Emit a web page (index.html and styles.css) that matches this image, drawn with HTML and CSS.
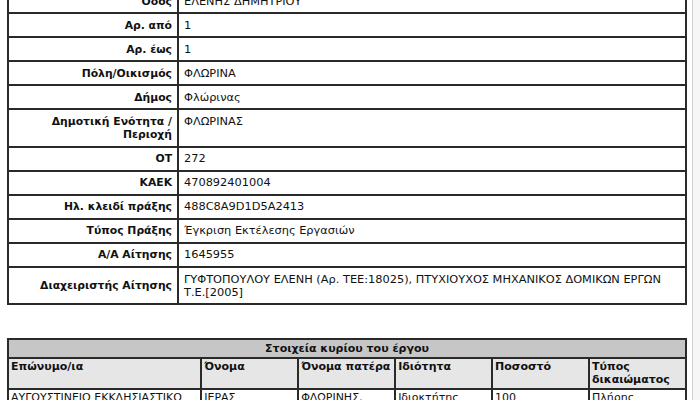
FILE: index.html
```html
<!DOCTYPE html>
<html lang="el">
<head>
<meta charset="utf-8">
<title>Στοιχεία έργου</title>
<link rel="stylesheet" href="styles.css">
</head>
<body>
<div class="page">
  <div class="content">
    <table class="info">
      <colgroup><col class="label-col"><col></colgroup>
      <tr><th>Οδός</th><td>ΕΛΕΝΗΣ ΔΗΜΗΤΡΙΟΥ</td></tr>
      <tr><th>Αρ. από</th><td>1</td></tr>
      <tr><th>Αρ. έως</th><td>1</td></tr>
      <tr><th>Πόλη/Οικισμός</th><td>ΦΛΩΡΙΝΑ</td></tr>
      <tr><th>Δήμος</th><td>Φλώρινας</td></tr>
      <tr><th>Δημοτική Ενότητα /<br>Περιοχή</th><td>ΦΛΩΡΙΝΑΣ</td></tr>
      <tr><th>ΟΤ</th><td>272</td></tr>
      <tr><th>ΚΑΕΚ</th><td>470892401004</td></tr>
      <tr><th>Ηλ. κλειδί πράξης</th><td>488C8A9D1D5A2413</td></tr>
      <tr><th>Τύπος Πράξης</th><td>Έγκριση Εκτέλεσης Εργασιών</td></tr>
      <tr><th>Α/Α Αίτησης</th><td>1645955</td></tr>
      <tr><th>Διαχειριστής Αίτησης</th><td>ΓΥΦΤΟΠΟΥΛΟΥ ΕΛΕΝΗ (Αρ. ΤΕΕ:18025), ΠΤΥΧΙΟΥΧΟΣ ΜΗΧΑΝΙΚΟΣ ΔΟΜΙΚΩΝ ΕΡΓΩΝ <span class="nowrap">Τ.Ε.[2005]</span></td></tr>
    </table>

    <table class="owners">
      <colgroup>
        <col class="c-wide"><col class="c-narrow"><col class="c-narrow"><col class="c-narrow"><col class="c-narrow"><col class="c-narrow">
      </colgroup>
      <tr class="title-row"><th colspan="6">Στοιχεία κυρίου του έργου</th></tr>
      <tr class="head-row">
        <th>Επώνυμο/ια</th>
        <th>Όνομα</th>
        <th>Όνομα πατέρα</th>
        <th>Ιδιότητα</th>
        <th>Ποσοστό</th>
        <th>Τύπος δικαιώματος</th>
      </tr>
      <tr class="data-row">
        <td>ΑΥΓΟΥΣΤΙΝΕΙΟ ΕΚΚΛΗΣΙΑΣΤΙΚΟ ΙΔΡΥΜΑ</td>
        <td>ΙΕΡΑΣ ΜΗΤΡΟΠΟΛΕΩΣ</td>
        <td>ΦΛΩΡΙΝΗΣ, ΠΡΕΣΠΩΝ ΚΑΙ ΕΟΡΔΑΙΑΣ</td>
        <td>Ιδιοκτήτης</td>
        <td>100</td>
        <td>Πλήρης κυριότητα</td>
      </tr>
    </table>
  </div>
  <div class="scroll"></div>
</div>
</body>
</html>
```

FILE: styles.css
```css
html, body {
  margin: 0;
  padding: 0;
  background: #ffffff;
}

body {
  font-family: "DejaVu Sans", Verdana, sans-serif;
  font-size: 11px;
  color: #111111;
  overflow: hidden;
}

.page {
  display: flex;
  width: 700px;
  height: 400px;
  overflow: hidden;
}

.content {
  flex: 1;
  padding: 0 5px 0 7px;
}

.scroll {
  width: 7px;
  border-left: 1px solid #cfcfcf;
  background: #f6f6f6;
}

table {
  width: 100%;
  border-collapse: collapse;
  table-layout: fixed;
}

.info {
  margin-top: -12px;
}

.info th,
.info td {
  border: 2px solid #2a2a2a;
  line-height: 13px;
  padding: 4.55px 5px;
}

.info th {
  text-align: right;
  font-weight: bold;
  font-size: 10.8px;
  vertical-align: middle;
}

.info td {
  text-align: left;
  font-size: 11.35px;
  vertical-align: top;
}

.nowrap {
  white-space: nowrap;
}

.label-col {
  width: 170px;
}

.owners {
  margin-top: 33px;
}

.owners th,
.owners td {
  border: 2px solid #2a2a2a;
  line-height: 13.5px;
  padding: 1px 2px;
  text-align: left;
  vertical-align: top;
}

.c-wide {
  width: 28.5%;
}

.title-row th {
  background: #c6c6c6;
  text-align: center;
  padding: 2px 2px 1px;
}

.head-row th {
  background: #e6e6e6;
  font-weight: bold;
}

.data-row td {
  background: #ffffff;
  padding-top: 1px;
}
```
